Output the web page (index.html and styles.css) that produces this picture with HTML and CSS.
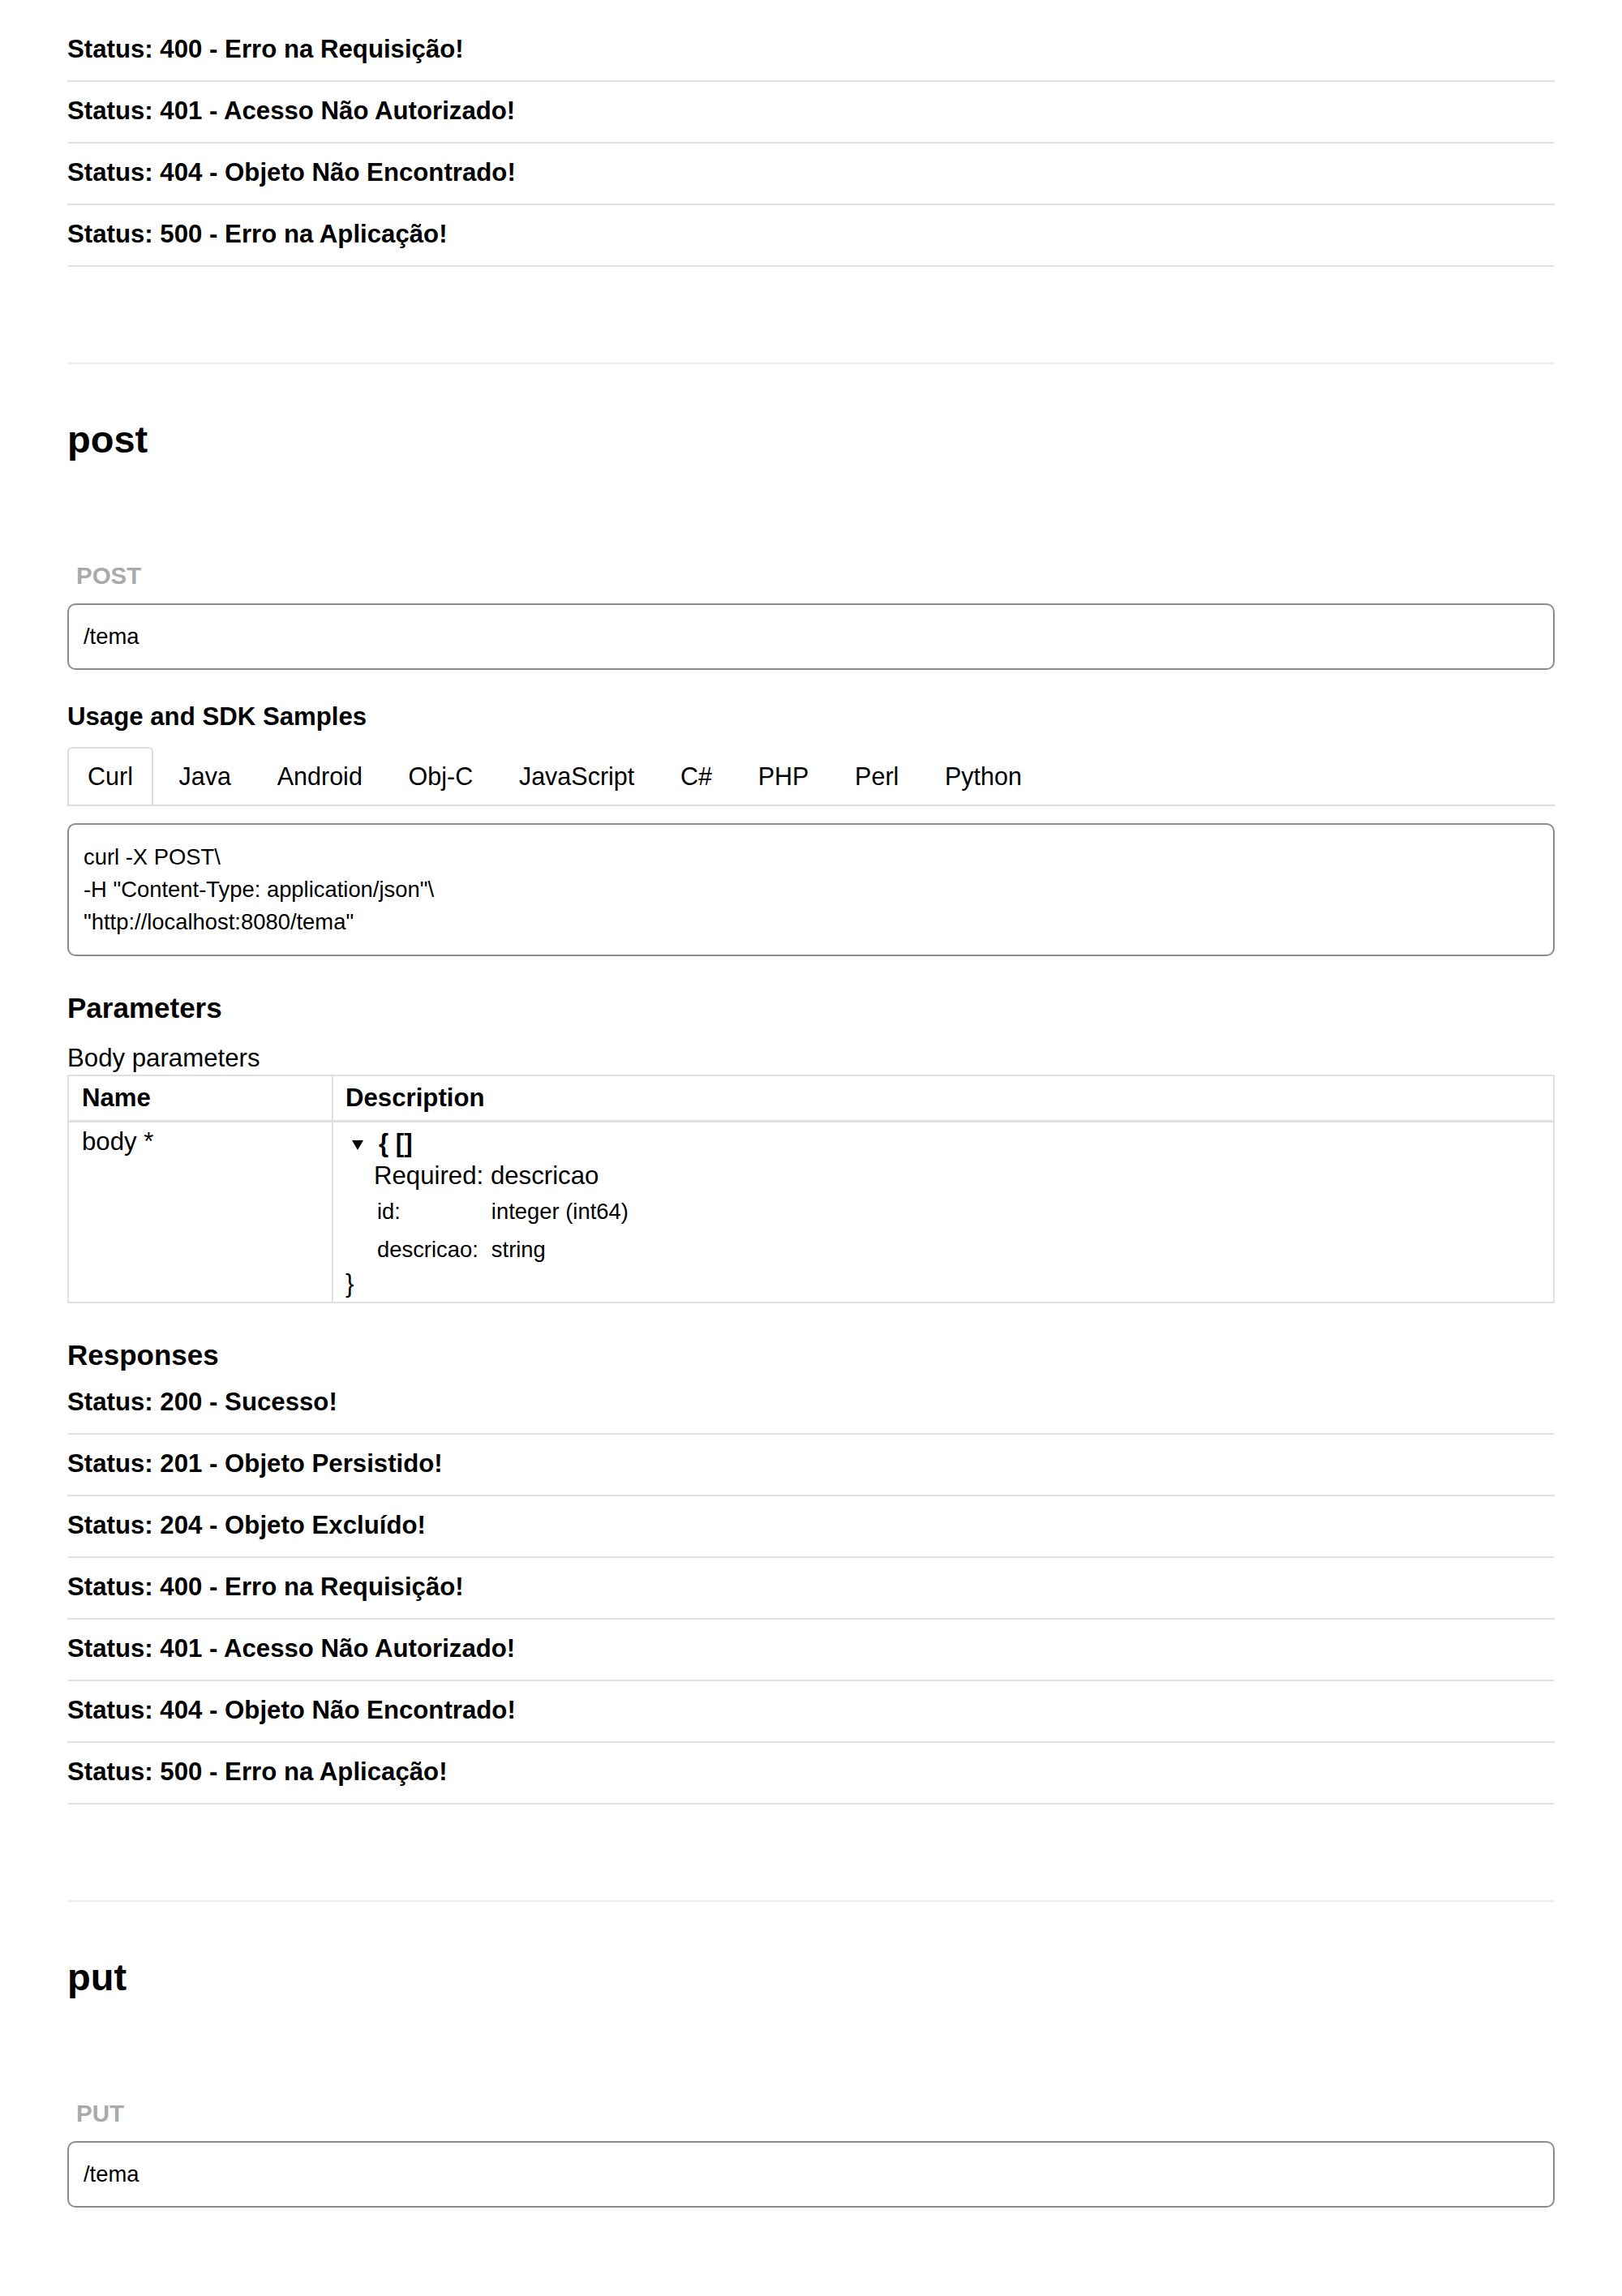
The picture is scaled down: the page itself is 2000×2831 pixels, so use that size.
FILE: index.html
```html
<!DOCTYPE html>
<html lang="pt">
<head>
<meta charset="utf-8">
<title>API</title>
<link rel="stylesheet" href="styles.css">
</head>
<body>
<main class="page">
  <section class="responses-tail">
    <div class="status">Status: 400 - Erro na Requisição!</div>
    <div class="status">Status: 401 - Acesso Não Autorizado!</div>
    <div class="status">Status: 404 - Objeto Não Encontrado!</div>
    <div class="status">Status: 500 - Erro na Aplicação!</div>
  </section>

  <section class="method">
    <h1 class="method-title">post</h1>
    <div class="verb">POST</div>
    <div class="path">/tema</div>

    <h3 class="usage-title">Usage and SDK Samples</h3>
    <ul class="tabs">
      <li class="tab active">Curl</li>
      <li class="tab">Java</li>
      <li class="tab">Android</li>
      <li class="tab">Obj-C</li>
      <li class="tab">JavaScript</li>
      <li class="tab">C#</li>
      <li class="tab">PHP</li>
      <li class="tab">Perl</li>
      <li class="tab">Python</li>
    </ul>
    <pre class="code">curl -X POST\
-H "Content-Type: application/json"\
"http://localhost:8080/tema"</pre>

    <h2 class="sub">Parameters</h2>
    <div class="body-params">Body parameters</div>
    <table class="params">
      <thead>
        <tr>
          <th class="cell-name">Name</th>
          <th class="cell-desc">Description</th>
        </tr>
      </thead>
      <tbody>
        <tr>
          <td class="cell-name">body *</td>
          <td class="cell-desc">
            <div class="model-head"><span class="toggle"></span><b>{ []</b></div>
            <div class="required">Required: descricao</div>
            <table class="props">
              <tr><td class="prop-name">id:</td><td class="prop-type">integer (int64)</td></tr>
              <tr><td class="prop-name">descricao:</td><td class="prop-type">string</td></tr>
            </table>
            <div class="close">}</div>
          </td>
        </tr>
      </tbody>
    </table>

    <h2 class="sub">Responses</h2>
    <div class="status-list">
      <div class="status">Status: 200 - Sucesso!</div>
      <div class="status">Status: 201 - Objeto Persistido!</div>
      <div class="status">Status: 204 - Objeto Excluído!</div>
      <div class="status">Status: 400 - Erro na Requisição!</div>
      <div class="status">Status: 401 - Acesso Não Autorizado!</div>
      <div class="status">Status: 404 - Objeto Não Encontrado!</div>
      <div class="status">Status: 500 - Erro na Aplicação!</div>
    </div>
  </section>

  <section class="method">
    <h1 class="method-title">put</h1>
    <div class="verb">PUT</div>
    <div class="path">/tema</div>
  </section>
</main>
</body>
</html>
```
FILE: styles.css
```css
* {
  box-sizing: border-box;
}

html,
body {
  margin: 0;
  padding: 0;
  background: #ffffff;
}

body {
  font-family: "Liberation Sans", Arial, Helvetica, sans-serif;
  color: #000000;
}

.page {
  width: 1834px;
  margin-left: 83px;
  padding-top: 25px;
  padding-bottom: 100px;
}

.status {
  font-size: 31.2px;
  font-weight: 700;
  line-height: 36px;
  padding: 18px 0 20px;
  border-bottom: 2px solid #e2e2e2;
}

.method {
  margin-top: 118px;
  border-top: 2px solid #efefef;
  padding-top: 67px;
}

.method-title {
  margin: 0;
  font-size: 47px;
  line-height: 52px;
  font-weight: 700;
}

.verb {
  margin-top: 124px;
  padding-left: 11px;
  font-size: 29.5px;
  line-height: 35px;
  font-weight: 700;
  color: #aaaaaa;
}

.path {
  margin-top: 17px;
  border: 2px solid #8c8c8c;
  border-radius: 10px;
  padding: 19px 18px;
  font-size: 27.4px;
  line-height: 40px;
}

.usage-title {
  margin: 40px 0 0;
  font-size: 31.2px;
  line-height: 36px;
  font-weight: 700;
}

.tabs {
  list-style: none;
  margin: 19px 0 0;
  padding: 0;
  display: flex;
  border-bottom: 2px solid #dddddd;
}

.tab {
  margin: 0 6.7px 0 0;
  padding: 17px 23px;
  border: 2px solid transparent;
  border-bottom: none;
  border-radius: 6px 6px 0 0;
  font-size: 30.5px;
  line-height: 35px;
}

.tab.active {
  border-color: #dddddd;
}

.code {
  margin: 21px 0 0;
  border: 2px solid #8c8c8c;
  border-radius: 10px;
  padding: 20px 18px;
  font-family: inherit;
  font-size: 27.4px;
  line-height: 40px;
  white-space: pre;
}

.sub {
  margin: 44px 0 0;
  font-size: 35px;
  line-height: 40px;
  font-weight: 700;
}

.body-params {
  margin-top: 24px;
  font-size: 31.2px;
  line-height: 36px;
}

.params {
  margin-top: 2px;
  width: 100%;
  border-collapse: separate;
  border-spacing: 0;
  border: 2px solid #e0e0e0;
  table-layout: fixed;
  font-size: 31.2px;
  line-height: 36px;
}

.params th {
  text-align: left;
  font-weight: 700;
  vertical-align: top;
  padding: 9px 15px 9px 16px;
  border-bottom: 3px solid #e0e0e0;
}

.params td.cell-name,
.params td.cell-desc {
  text-align: left;
  vertical-align: top;
  padding: 6px 15px 3px 16px;
}

.params .cell-name {
  width: 324px;
}

.params th.cell-desc,
.params td.cell-desc {
  border-left: 2px solid #e0e0e0;
  padding-left: 15px;
}

.model-head {
  line-height: 40px;
}

.toggle {
  display: inline-block;
  width: 0;
  height: 0;
  border-left: 7px solid transparent;
  border-right: 7px solid transparent;
  border-top: 12px solid #000000;
  margin: 0 19px 0 8px;
  vertical-align: middle;
}

.required {
  line-height: 40px;
  padding-left: 35px;
}

.props {
  border-collapse: collapse;
  margin-left: 35px;
  font-size: 27.4px;
  line-height: 31px;
}

.props td {
  padding: 8px 12px 8px 4px;
  vertical-align: top;
}

.close {
  line-height: 38px;
}

.status-list {
  margin-top: 2px;
}
```
